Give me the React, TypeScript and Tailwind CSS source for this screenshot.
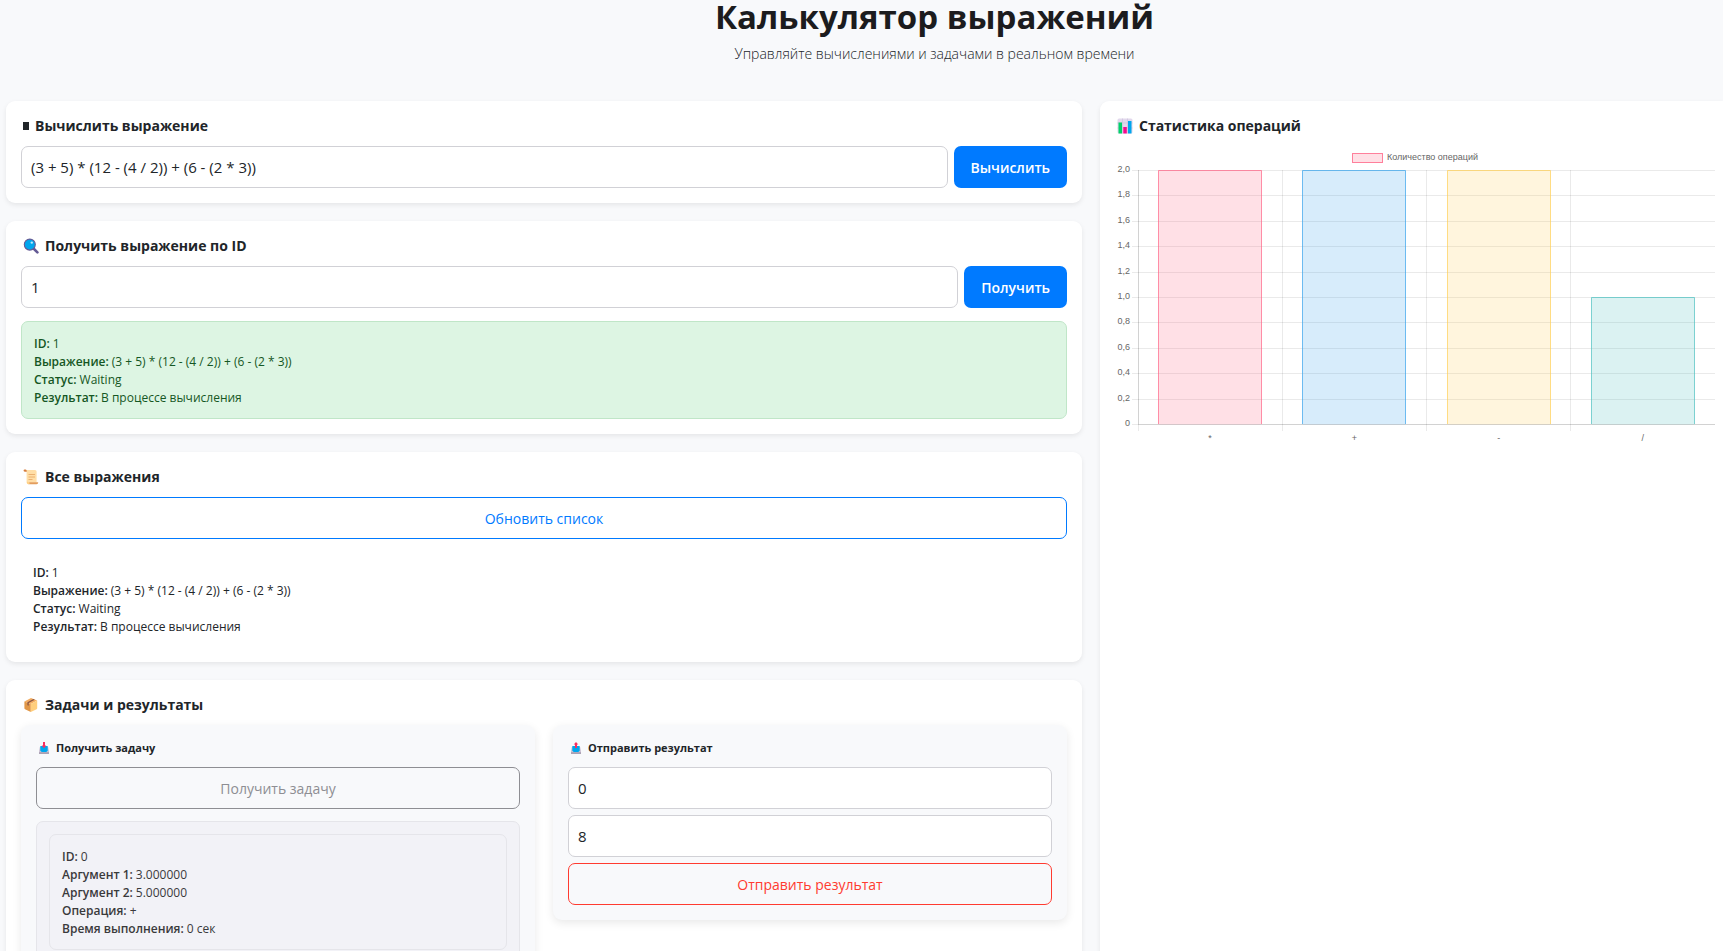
import { useState, type ReactNode } from "react";

const GRID = "rgba(0,0,0,0.1)";

const operations = [
  { name: "*", count: 2, color: "255,99,132" },
  { name: "+", count: 2, color: "54,162,235" },
  { name: "-", count: 2, color: "255,206,86" },
  { name: "/", count: 1, color: "75,192,192" },
];

function OperationsChart() {
  const left = 23;
  const right = 600;
  const top = 24;
  const bottom = 278;
  const max = 2;
  const step = (right - left) / operations.length;
  const ticks = Array.from({ length: 11 }, (_, i) => i / 5);
  const y = (v: number) => Math.round(bottom - (v / max) * (bottom - top)) + 0.5;
  return (
    <svg viewBox="0 0 600 300" className="block w-full" role="img" aria-label="Количество операций">
      {ticks.map((t) => (
        <g key={t}>
          <line x1={left - 6} x2={right} y1={y(t)} y2={y(t)} stroke={GRID} strokeOpacity={0.8} />
          <text x={15} y={y(t) + 1.5} textAnchor="end" fontSize={9} fill="#666">
            {t === 0 ? "0" : t.toFixed(1).replace(".", ",")}
          </text>
        </g>
      ))}
      {operations.map((op, i) => {
        const x = Math.floor(left + step * i) + 0.5;
        const bx = Math.round(left + step * i + step * 0.14) + 0.5;
        const bw = Math.round(step * 0.72) - 1;
        return (
          <g key={op.name}>
            <line x1={x} x2={x} y1={top} y2={bottom + 7} stroke={GRID} strokeOpacity={0.8} />
            <rect x={bx} y={y(op.count)} width={bw} height={bottom + 0.5 - y(op.count)} fill={`rgba(${op.color},0.2)`} />
            <path
              d={`M${bx} ${bottom}V${y(op.count)}H${bx + bw}V${bottom}`}
              fill="none"
              stroke={`rgba(${op.color},0.7)`}
            />
            <text x={left + step * (i + 0.5)} y={295} textAnchor="middle" fontSize={9} fill="#666">
              {op.name}
            </text>
          </g>
        );
      })}
      <line x1={left + 0.5} x2={left + 0.5} y1={top} y2={bottom} stroke={GRID} />
      <line x1={left} x2={right} y1={bottom + 0.5} y2={bottom + 0.5} stroke={GRID} />
      <rect x={237.5} y={7.5} width={30} height={9} fill="rgba(255,99,132,0.2)" stroke="rgba(255,99,132,0.8)" />
      <text x={272} y={14} fontSize={9} fill="#666">
        Количество операций
      </text>
    </svg>
  );
}

const icon = "size-4 shrink-0";

function BlockIcon() {
  return (
    <svg viewBox="0 0 6 16" className="h-4 w-1.5 shrink-0" aria-hidden="true">
      <rect x="0" y="4" width="6" height="8" fill="#212529" />
    </svg>
  );
}

function SearchIcon() {
  return (
    <svg viewBox="0 0 16 16" className={icon} aria-hidden="true">
      <path d="M10.5 10.5 14.4 14.4" stroke="#635994" strokeWidth="2.6" strokeLinecap="round" />
      <circle cx="6.8" cy="6.600" r="5.500" fill="#00a6ed" stroke="#635994" strokeWidth="1.1" />
      <circle cx="8.8" cy="4.600" r="1.200" fill="#b9e8fb" />
    </svg>
  );
}

function ScrollIcon() {
  return (
    <svg viewBox="0 0 16 16" className={icon} aria-hidden="true">
      <path d="M2.5 1H12a1.6 1.6 0 0 1 1.6 1.6V13.5H5A1.5 1.5 0 0 1 3.6 12V3Z" fill="#ffdea7" />
      <path d="M.6 1.6C.6 1 1.200.6 2 .6S3.700 1 3.700 2v.8H1.800C1 2.800.6 2.300.6 1.600Z" fill="#d67d3e" />
      <path d="M6 13.200h9.200c0 1.200-.6 2-1.700 2H5.200c1 0 .8-1 .8-2Z" fill="#e39d5c" />
      <path d="M3.600 12.500c0 1.600.6 2.700 1.700 2.700s1.400-.7 1.400-1.700Z" fill="#ffcf82" />
      <path d="M5.500 5.500h6.500M5.500 8h6.500M5.500 10.500h4" stroke="#e9ab6c" strokeWidth=".9" />
    </svg>
  );
}

function PackageIcon() {
  return (
    <svg viewBox="0 0 16 16" className={icon} aria-hidden="true">
      <path d="M8 1 14.200 3.600 7.800 7 1.400 4.500Z" fill="#f3ad61" />
      <path d="M1.400 4.500 7.800 7V15L2 12.300a1 1 0 0 1-.6-1Z" fill="#e19747" />
      <path d="M14.200 3.600 7.800 7V15l5.800-2.800a1 1 0 0 0 .6-1Z" fill="#ffce7c" />
      <path d="M10.400 2 4.400 5.300V8.200L5.700 8.800V6L11.800 2.700Z" fill="#8c5543" />
    </svg>
  );
}

function ChartIcon() {
  return (
    <svg viewBox="0 0 16 16" className={icon} aria-hidden="true">
      <rect x=".5" y=".5" width="15" height="15" rx="1.500" fill="#e1d8ec" />
      <path d="M5.500.5v15M10.500.5v15M.5 5h15M.5 10h15" stroke="#cdc2dc" strokeWidth=".7" />
      <rect x="1.500" y="4.500" width="3.500" height="11" fill="#00d26a" />
      <rect x="6.300" y="9" width="3.500" height="6.500" fill="#f70a8d" />
      <rect x="11" y="3" width="3.500" height="12.500" fill="#00a6ed" />
    </svg>
  );
}

function TrayIcon({ up = false }: { up?: boolean }) {
  return (
    <svg viewBox="0 0 12 12" className="size-3 shrink-0" aria-hidden="true">
      <path d="M1.800 5h8.400L11 9v2.500H1V9Z" fill="#cdc4d6" />
      <path d="M1 10.200h10V12H1Z" fill="#aaa1b3" />
      <path d="M2.300 4h7.400v4.800L8.300 10H3.700L2.300 8.800Z" fill="#00a6ed" />
      {up ? (
        <path d="M6 0 8.300 2.600H7V6H5V2.600H3.700Z" fill="#f92f60" />
      ) : (
        <path d="M5 0h2v3.600h1.300L6 6.200 3.700 3.600H5Z" fill="#f92f60" />
      )}
    </svg>
  );
}

function Card({ title, icon, className = "", children }: { title: string; icon: ReactNode; className?: string; children: ReactNode }) {
  return (
    <section className={`bg-white p-[15px] shadow-[0_2px_5px_rgba(0,0,0,0.08)] ${className}`}>
      <h2 className="mb-2.5 flex items-center gap-1.5 pl-0.5 text-[14px] leading-5 font-bold text-[#212529]">
        {icon}
        {title}
      </h2>
      {children}
    </section>
  );
}

function SubCard({ title, icon, children }: { title: string; icon: ReactNode; children: ReactNode }) {
  return (
    <div className="flex-1 rounded-[9px] bg-[#f8f9fb] p-[15px] shadow-[0_3px_10px_rgba(0,0,0,0.09)]">
      <h3 className="mb-3 flex items-center gap-1.5 pl-0.5 text-[11px] leading-[15px] font-bold text-[#212529]">
        {icon}
        {title}
      </h3>
      {children}
    </div>
  );
}

function Details({ rows }: { rows: [string, string][] }) {
  return (
    <dl className="px-3 pt-[13px] pb-[11px] text-[12px] leading-[18px]">
      {rows.map(([k, v]) => (
        <div key={k} className="flex gap-[3px]">
          <dt className="font-semibold">{k}:</dt>
          <dd>{v}</dd>
        </div>
      ))}
    </dl>
  );
}

const expression: [string, string][] = [
  ["ID", "1"],
  ["Выражение", "(3 + 5) * (12 - (4 / 2)) + (6 - (2 * 3))"],
  ["Статус", "Waiting"],
  ["Результат", "В процессе вычисления"],
];

const task: [string, string][] = [
  ["ID", "0"],
  ["Аргумент 1", "3.000000"],
  ["Аргумент 2", "5.000000"],
  ["Операция", "+"],
  ["Время выполнения", "0 сек"],
];

const input =
  "h-[42px] w-full min-w-0 rounded-[7px] border border-[#d1d1d6] bg-white px-[9px] text-[15px] text-[#212529] outline-none";
const primary = "h-[42px] shrink-0 rounded-[7px] bg-[#007aff] px-[17px] text-[14px] font-semibold text-white";
const outline = "h-[42px] w-full rounded-[7px] border text-[14px] font-medium";

export default function App() {
  const [expr, setExpr] = useState("(3 + 5) * (12 - (4 / 2)) + (6 - (2 * 3))");
  const [id, setId] = useState("1");
  const [taskId, setTaskId] = useState("0");
  const [result, setResult] = useState("8");
  return (
    <main className="min-h-screen bg-[#f8f9fb] pb-4 font-['Open_Sans','Noto_Sans',sans-serif] text-[#212529]">
      <header className="pb-9 pl-[146px] text-center">
        <h1 className="text-[33px] leading-[34px] font-bold text-[#1c1c1e]">Калькулятор выражений</h1>
        <p className="pt-[9px] text-[14px] leading-[22px] font-light">Управляйте вычислениями и задачами в реальном времени</p>
      </header>
      <div className="grid grid-cols-[1076fr_623fr] gap-[18px] pl-1.5">
        <div className="flex min-w-0 flex-col gap-[18px]">
          <Card title="Вычислить выражение" icon={<BlockIcon />} className="rounded-[9px]">
            <form className="flex gap-1.5" onSubmit={(e) => e.preventDefault()}>
              <input aria-label="Выражение" className={input} value={expr} onChange={(e) => setExpr(e.target.value)} />
              <button className={primary}>Вычислить</button>
            </form>
          </Card>
          <Card title="Получить выражение по ID" icon={<SearchIcon />} className="rounded-[9px]">
            <form className="flex gap-1.5" onSubmit={(e) => e.preventDefault()}>
              <input aria-label="ID выражения" className={input} value={id} onChange={(e) => setId(e.target.value)} />
              <button className={primary}>Получить</button>
            </form>
            <div className="mt-[13px] rounded-[7px] border border-[#c0e6c8] bg-[#ddf5e3] text-[#155724]">
              <Details rows={expression} />
            </div>
          </Card>
          <Card title="Все выражения" icon={<ScrollIcon />} className="rounded-[9px]">
            <button type="button" className={`${outline} border-[#007aff] text-[#007aff]`}>
              Обновить список
            </button>
            <div className="mt-3">
              <Details rows={expression} />
            </div>
          </Card>
          <Card title="Задачи и результаты" icon={<PackageIcon />} className="rounded-[9px]">
            <div className="flex items-start gap-[18px]">
              <SubCard title="Получить задачу" icon={<TrayIcon />}>
                <button type="button" className={`${outline} border-[#8e8e93] text-[#8e8e93]`}>
                  Получить задачу
                </button>
                <div className="mt-3 rounded-[7px] border border-[#e5e5ea] bg-[#f2f2f7] p-3 text-[#3a3a3c]">
                  <div className="rounded-[7px] border border-[#e5e5ea]">
                    <Details rows={task} />
                  </div>
                </div>
              </SubCard>
              <SubCard title="Отправить результат" icon={<TrayIcon up />}>
                <form className="flex flex-col gap-1.5" onSubmit={(e) => e.preventDefault()}>
                  <input aria-label="ID задачи" className={input} value={taskId} onChange={(e) => setTaskId(e.target.value)} />
                  <input aria-label="Результат" className={input} value={result} onChange={(e) => setResult(e.target.value)} />
                  <button className={`${outline} border-[#ff3b30] text-[#ff3b30]`}>Отправить результат</button>
                </form>
              </SubCard>
            </div>
          </Card>
        </div>
        <Card title="Статистика операций" icon={<ChartIcon />} className="min-w-0 rounded-l-[9px] pr-2">
          <div className="font-['Liberation_Sans',Arial,sans-serif]">
            <OperationsChart />
          </div>
        </Card>
      </div>
    </main>
  );
}
